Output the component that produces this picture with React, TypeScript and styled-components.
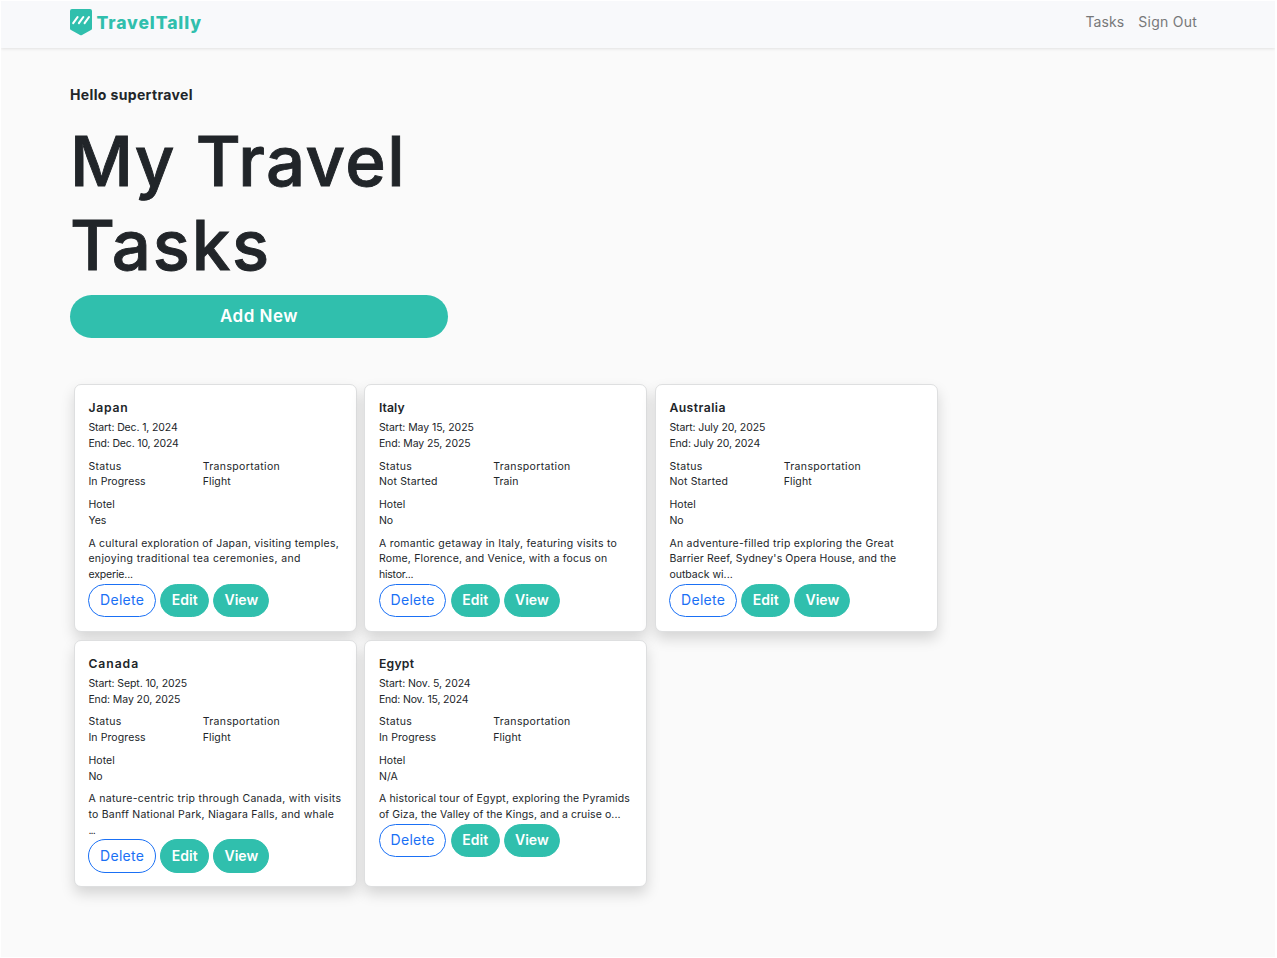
import React from "react";
import styled, { createGlobalStyle } from "styled-components";

const TEAL = "#30bfad";
const INK = "#212529";

const GlobalStyle = createGlobalStyle`
  * { box-sizing: border-box; }
  body { margin: 0; background: #fff; }
  h1, h2, p { margin: 0; }
`;

const Page = styled.div`
  height: 958px;
  overflow: hidden;
  border: 1px solid #fff;
  border-right-width: 2px;
  background: #fafafa;
  color: ${INK};
  font-family: Inter, "Open Sans", sans-serif;
  white-space: nowrap;
`;

const Navbar = styled.header`
  display: flex;
  justify-content: space-between;
  height: 47px;
  padding: 8px 78px 0 69px;
  background: #f8f9fb;
  box-shadow: 0 1px 3px rgba(0, 0, 0, 0.1);
`;

const Brand = styled.a`
  display: flex;
  gap: 4.5px;
  height: 27px;
  color: ${TEAL};
  font-size: 17.5px;
  font-weight: 800;
  line-height: 28px;
`;

const Track = styled.span<{ $track: number }>`
  letter-spacing: ${(p) => p.$track}px;
`;

const NavLinks = styled.nav`
  display: flex;
  gap: 14px;
  color: #777879;
  font-size: 14px;
  line-height: 26px;
`;

const Main = styled.main`
  padding: 36px 0 0 69px;
`;

const Greeting = styled.p`
  font-size: 14px;
  font-weight: 700;
  line-height: 21px;
`;

const Title = styled.h1`
  margin-top: 14px;
  font-size: 69px;
  font-weight: 500;
  line-height: 84px;
  -webkit-text-stroke: 0.9px ${INK};
`;

const TitleLine = styled.span<{ $track: number }>`
  display: block;
  letter-spacing: ${(p) => p.$track}px;
`;

const AddButton = styled.button`
  display: block;
  width: 378px;
  height: 43px;
  margin-top: 8px;
  padding: 0 0 2px;
  border: 0;
  border-radius: 22px;
  background: ${TEAL};
  color: #fff;
  font: 600 17px Inter, sans-serif;
  letter-spacing: 0.5px;
`;

const CardGrid = styled.section`
  display: grid;
  grid-template-columns: repeat(3, 283px);
  grid-auto-rows: 247.5px;
  gap: 8.3px 7.5px;
  margin: 46.2px 0 0 3.6px;
`;

const Card = styled.article`
  padding: 15px 13.8px 0;
  border: 1px solid #dedfe0;
  border-radius: 7px;
  background: #fff;
  box-shadow: 0 7px 14px rgba(0, 0, 0, 0.15);
  font-size: 10.5px;
  line-height: 15.75px;
`;

const CardTitle = styled.h2`
  margin-bottom: 4.4px;
  font-size: 12.2px;
  font-weight: 600;
  line-height: 15.5px;
`;

const Fields = styled.div`
  display: grid;
  grid-template-columns: 114.4px 1fr;
  margin-top: 7px;
`;

const Line = styled.span<{ $track?: number }>`
  display: block;
  letter-spacing: ${(p) => p.$track ?? 0}px;
`;

const Description = styled.p`
  margin-top: 7px;
`;

const Actions = styled.div`
  display: flex;
  gap: 4.2px;
  margin-top: 0.8px;
`;

const Action = styled.button<{ $width: number; $outline?: boolean }>`
  width: ${(p) => p.$width}px;
  height: 33.5px;
  padding: 0 0 1px;
  border: 1px solid ${(p) => (p.$outline ? "#1a70f5" : TEAL)};
  border-radius: 17px;
  background: ${(p) => (p.$outline ? "#fff" : TEAL)};
  color: ${(p) => (p.$outline ? "#1a70f5" : "#fff")};
  font: ${(p) => (p.$outline ? 400 : 600)} 14px Inter, sans-serif;
  letter-spacing: ${(p) => (p.$outline ? 0.3 : 0)}px;
`;

type Text = [text: string, track: number];

interface Trip {
  name: Text;
  start: Text;
  end: Text;
  status: Text;
  transport: Text;
  hotel: Text;
  description: Text[];
}

const trips: Trip[] = [
  {
    name: ["Japan", 0.75],
    start: ["Start: Dec. 1, 2024", -0.13],
    end: ["End: Dec. 10, 2024", -0.17],
    status: ["In Progress", 0.1],
    transport: ["Flight", 0.1],
    hotel: ["Yes", 0],
    description: [
      ["A cultural exploration of Japan, visiting temples,", 0.245],
      ["enjoying traditional tea ceremonies, and", 0.36],
      ["experie...", -0.15],
    ],
  },
  {
    name: ["Italy", 0.1],
    start: ["Start: May 15, 2025", -0.05],
    end: ["End: May 25, 2025", -0.1],
    status: ["Not Started", 0.18],
    transport: ["Train", 0.1],
    hotel: ["No", 0],
    description: [
      ["A romantic getaway in Italy, featuring visits to", 0.27],
      ["Rome, Florence, and Venice, with a focus on", 0.19],
      ["histor...", -0.2],
    ],
  },
  {
    name: ["Australia", 0.45],
    start: ["Start: July 20, 2025", -0.1],
    end: ["End: July 20, 2024", -0.15],
    status: ["Not Started", 0.18],
    transport: ["Flight", 0.1],
    hotel: ["No", 0],
    description: [
      ["An adventure-filled trip exploring the Great", 0.27],
      ["Barrier Reef, Sydney's Opera House, and the", 0.12],
      ["outback wi...", 0],
    ],
  },
  {
    name: ["Canada", 0.95],
    start: ["Start: Sept. 10, 2025", -0.1],
    end: ["End: May 20, 2025", -0.09],
    status: ["In Progress", 0.1],
    transport: ["Flight", 0.1],
    hotel: ["No", 0],
    description: [
      ["A nature-centric trip through Canada, with visits", 0.3],
      ["to Banff National Park, Niagara Falls, and whale", 0.23],
      ["...", -0.8],
    ],
  },
  {
    name: ["Egypt", 0.25],
    start: ["Start: Nov. 5, 2024", -0.08],
    end: ["End: Nov. 15, 2024", -0.18],
    status: ["In Progress", 0.1],
    transport: ["Flight", 0.1],
    hotel: ["N/A", 0.1],
    description: [
      ["A historical tour of Egypt, exploring the Pyramids", 0.17],
      ["of Giza, the Valley of the Kings, and a cruise o...", 0.09],
    ],
  },
];

function Shield() {
  return (
    <svg width="22" height="27" viewBox="0 0 22 27">
      <path d="M2 0H20Q22 0 22 2V19.5Q22 20.5 21 21L12 26Q11 26.6 10 26L1 21Q0 20.5 0 19.5V2Q0 0 2 0Z" fill={TEAL} />
      <path d="M3.2 14.2L7.6 8M8.9 14.2L13.3 8M14.6 14.2L19 8" stroke="#fff" strokeWidth="2.1" strokeLinecap="round" />
    </svg>
  );
}

function TripCard({ trip }: { trip: Trip }) {
  const line = ([text, track]: Text) => (
    <Line key={text} $track={track}>{text}</Line>
  );
  return (
    <Card>
      <CardTitle>{line(trip.name)}</CardTitle>
      {line(trip.start)}
      {line(trip.end)}
      <Fields>
        <div>
          <Line $track={0.33}>Status</Line>
          {line(trip.status)}
        </div>
        <div>
          <Line $track={0.35}>Transportation</Line>
          {line(trip.transport)}
        </div>
      </Fields>
      <Fields>
        <div>
          <Line $track={0.1}>Hotel</Line>
          {line(trip.hotel)}
        </div>
      </Fields>
      <Description>{trip.description.map(line)}</Description>
      <Actions>
        <Action $width={67.6} $outline>Delete</Action>
        <Action $width={49}>Edit</Action>
        <Action $width={56}>View</Action>
      </Actions>
    </Card>
  );
}

export default function App() {
  return (
    <Page>
      <GlobalStyle />
      <Navbar>
        <Brand>
          <Shield />
          <Track $track={0.9}>TravelTally</Track>
        </Brand>
        <NavLinks>
          <Track $track={0.1}>Tasks</Track>
          <Track $track={0.25}>Sign Out</Track>
        </NavLinks>
      </Navbar>
      <Main>
        <Greeting><Track $track={0.36}>Hello supertravel</Track></Greeting>
        <Title>
          <TitleLine $track={1.4}>My Travel</TitleLine>
          <TitleLine $track={1.8}>Tasks</TitleLine>
        </Title>
        <AddButton>Add New</AddButton>
        <CardGrid>
          {trips.map((trip) => (
            <TripCard key={trip.name[0]} trip={trip} />
          ))}
        </CardGrid>
      </Main>
    </Page>
  );
}
